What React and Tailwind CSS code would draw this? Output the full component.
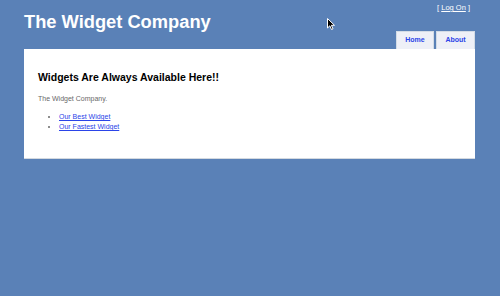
export default function App() {
  return (
    <div className="relative h-[296px] w-[500px] overflow-hidden bg-[#5a81b7] font-['Liberation_Sans',Arial,sans-serif]">
      <div className="ml-[24px] w-[451px]">
        <div className="flex h-[49px] items-start justify-between">
          <h1 className="pt-[10px] text-[18.3px] font-bold leading-[24px] text-white">The Widget Company</h1>
          <div className="flex h-full flex-col items-end justify-between">
            <div className="pr-[5px] pt-[3px] text-[7.5px] leading-[10px] text-white">
              [ <a href="#" className="underline">Log On</a> ]
            </div>
            <div className="flex gap-[2px]">
              <a href="#" className="flex h-[18px] w-[38px] items-center justify-center border-x border-t border-[#d3dce6] bg-[#eef0f7] text-[7px] font-bold text-[#2b44e8]">Home</a>
              <a href="#" className="flex h-[18px] w-[39px] items-center justify-center border-x border-t border-[#d3dce6] bg-[#eef0f7] text-[7px] font-bold text-[#2b44e8]">About</a>
            </div>
          </div>
        </div>
        <div className="h-[110px] border-b border-[#d3d9e0] bg-white px-[14px] pt-[21px]">
          <h2 className="text-[10.5px] font-bold leading-[14px] text-black">Widgets Are Always Available Here!!</h2>
          <p className="mt-[10px] text-[7px] leading-[9px] text-[#696969]">The Widget Company.</p>
          <ul className="mt-[9px] list-disc pl-[21px] text-[7px] leading-[10px] text-[#696969]">
            <li><a href="#" className="text-[#2b44e8] underline">Our Best Widget</a></li>
            <li><a href="#" className="text-[#2b44e8] underline">Our Fastest Widget</a></li>
          </ul>
        </div>
      </div>
      <svg className="absolute left-[327px] top-[18px]" width="9" height="13" viewBox="0 0 9 13">
        <path d="M0.5 0.5 L0.5 10 L2.8 7.8 L4.5 11.5 L6 10.8 L4.4 7.3 L7.5 7.3 Z" fill="#000" stroke="#fff" strokeWidth="1" />
      </svg>
    </div>
  );
}
